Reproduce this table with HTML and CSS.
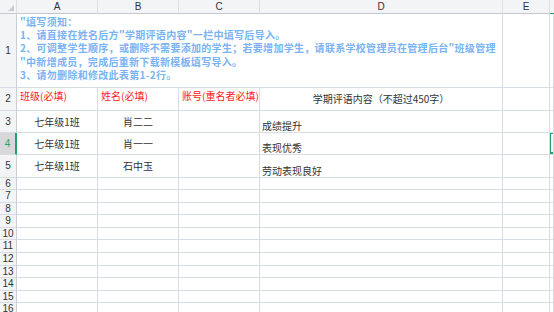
FILE: index.html
```html
<!DOCTYPE html>
<html lang="zh-CN">
<head>
<meta charset="utf-8">
<title>学期评语导入模板</title>
<link rel="stylesheet" href="styles.css">
</head>
<body>
<div class="sheet">
  <div class="row colhead h14">
    <div class="cell corner"><span class="tri"></span></div>
    <div class="cell">A</div>
    <div class="cell">B</div>
    <div class="cell">C</div>
    <div class="cell">D</div>
    <div class="cell">E</div>
    <div class="cell fcol"></div>
  </div>

  <div class="row h74">
    <div class="cell rh">1</div>
    <div class="cell notice">"填写须知：<br>1、请直接在姓名后方"学期评语内容"一栏中填写后导入。<br>2、可调整学生顺序，或删除不需要添加的学生；若要增加学生，请联系学校管理员在管理后台"班级管理<br>"中新增成员，完成后重新下载新模板填写导入。<br>3、请勿删除和修改此表第1-2行。</div>
    <div class="cell"></div>
    <div class="cell"></div>
  </div>

  <div class="row h23">
    <div class="cell rh">2</div>
    <div class="cell req">班级(必填)</div>
    <div class="cell req">姓名(必填)</div>
    <div class="cell req">账号(重名者必填)</div>
    <div class="cell mid">学期评语内容（不超过450字）</div>
    <div class="cell"></div>
    <div class="cell"></div>
  </div>

  <div class="row h22">
    <div class="cell rh">3</div>
    <div class="cell mid">七年级1班</div>
    <div class="cell mid">肖二二</div>
    <div class="cell"></div>
    <div class="cell bot">成绩提升</div>
    <div class="cell"></div>
    <div class="cell"></div>
  </div>

  <div class="row h22">
    <div class="cell rh active">4</div>
    <div class="cell mid">七年级1班</div>
    <div class="cell mid">肖一一</div>
    <div class="cell"></div>
    <div class="cell bot">表现优秀</div>
    <div class="cell"></div>
    <div class="cell sel"></div>
  </div>

  <div class="row h23">
    <div class="cell rh">5</div>
    <div class="cell mid">七年级1班</div>
    <div class="cell mid">石中玉</div>
    <div class="cell"></div>
    <div class="cell bot">劳动表现良好</div>
    <div class="cell"></div>
    <div class="cell"></div>
  </div>

  <div class="row h12"><div class="cell rh">6</div><div class="cell"></div><div class="cell"></div><div class="cell"></div><div class="cell"></div><div class="cell"></div><div class="cell"></div></div>
  <div class="row h13"><div class="cell rh">7</div><div class="cell"></div><div class="cell"></div><div class="cell"></div><div class="cell"></div><div class="cell"></div><div class="cell"></div></div>
  <div class="row h12"><div class="cell rh">8</div><div class="cell"></div><div class="cell"></div><div class="cell"></div><div class="cell"></div><div class="cell"></div><div class="cell"></div></div>
  <div class="row h13"><div class="cell rh">9</div><div class="cell"></div><div class="cell"></div><div class="cell"></div><div class="cell"></div><div class="cell"></div><div class="cell"></div></div>
  <div class="row h12"><div class="cell rh">10</div><div class="cell"></div><div class="cell"></div><div class="cell"></div><div class="cell"></div><div class="cell"></div><div class="cell"></div></div>
  <div class="row h13"><div class="cell rh">11</div><div class="cell"></div><div class="cell"></div><div class="cell"></div><div class="cell"></div><div class="cell"></div><div class="cell"></div></div>
  <div class="row h13"><div class="cell rh">12</div><div class="cell"></div><div class="cell"></div><div class="cell"></div><div class="cell"></div><div class="cell"></div><div class="cell"></div></div>
  <div class="row h12"><div class="cell rh">13</div><div class="cell"></div><div class="cell"></div><div class="cell"></div><div class="cell"></div><div class="cell"></div><div class="cell"></div></div>
  <div class="row h13"><div class="cell rh">14</div><div class="cell"></div><div class="cell"></div><div class="cell"></div><div class="cell"></div><div class="cell"></div><div class="cell"></div></div>
  <div class="row h12"><div class="cell rh">15</div><div class="cell"></div><div class="cell"></div><div class="cell"></div><div class="cell"></div><div class="cell"></div><div class="cell"></div></div>
  <div class="row h13"><div class="cell rh">16</div><div class="cell"></div><div class="cell"></div><div class="cell"></div><div class="cell"></div><div class="cell"></div><div class="cell"></div></div>
</div>
</body>
</html>
```

FILE: styles.css
```css
html, body {
  margin: 0;
  padding: 0;
  background: #ffffff;
  overflow: hidden;
}

.sheet {
  width: 554px;
  font-family: "Noto Sans CJK SC", "Liberation Sans", sans-serif;
  font-size: 10px;
  color: #333333;
}

.row {
  display: grid;
  grid-template-columns: 17px 81px 81px 81px 243px 47px 1fr;
}

.h12 { height: 12px; }
.h13 { height: 13px; }
.h14 { height: 14px; }
.h22 { height: 22px; }
.h23 { height: 23px; }
.h74 { height: 74px; }

.cell {
  box-sizing: border-box;
  border-right: 1px solid #d7dbe4;
  border-bottom: 1px solid #d7dbe4;
  overflow: hidden;
  white-space: nowrap;
  line-height: 12px;
}

.colhead .cell {
  background: #f3f4f6;
  border-right-color: #dcdfe4;
  border-bottom-color: #c3c8d2;
  font-family: "Liberation Sans", sans-serif;
  font-size: 10px;
  color: #333;
  text-align: center;
  line-height: 13px;
}

.colhead .fcol {
  border-bottom: 1px solid #21a366;
  border-right: none;
}

.corner {
  position: relative;
}

.tri {
  position: absolute;
  right: 2px;
  bottom: 2px;
  width: 0;
  height: 0;
  border-left: 6px solid transparent;
  border-bottom: 6px solid #c8cbd0;
}

.rh {
  background: #f3f4f6;
  border-right-color: #c9ced7;
  font-family: "Liberation Sans", sans-serif;
  font-size: 10px;
  color: #333;
  display: flex;
  align-items: center;
  justify-content: center;
}

.rh.active {
  background: #d6d8dc;
  color: #21a366;
  border-right: 2px solid #21a366;
}

.notice {
  grid-column: span 4;
  white-space: normal;
  padding: 1px 0 0 3px;
  color: #7ab3f3;
  font-weight: bold;
  line-height: 13.2px;
  letter-spacing: 0.3px;
}

.req {
  color: #ff1a1a;
  padding: 2px 0 0 3px;
}

.mid {
  display: flex;
  align-items: center;
  justify-content: center;
  color: #333;
}

.bot {
  display: flex;
  align-items: flex-end;
  padding: 0 0 0 2px;
  color: #333;
}

.sel {
  position: relative;
}

.sel::before {
  content: "";
  position: absolute;
  left: -1px;
  top: -1px;
  width: 20px;
  height: 22px;
  border: 2px solid #21a366;
  box-sizing: border-box;
}
```
